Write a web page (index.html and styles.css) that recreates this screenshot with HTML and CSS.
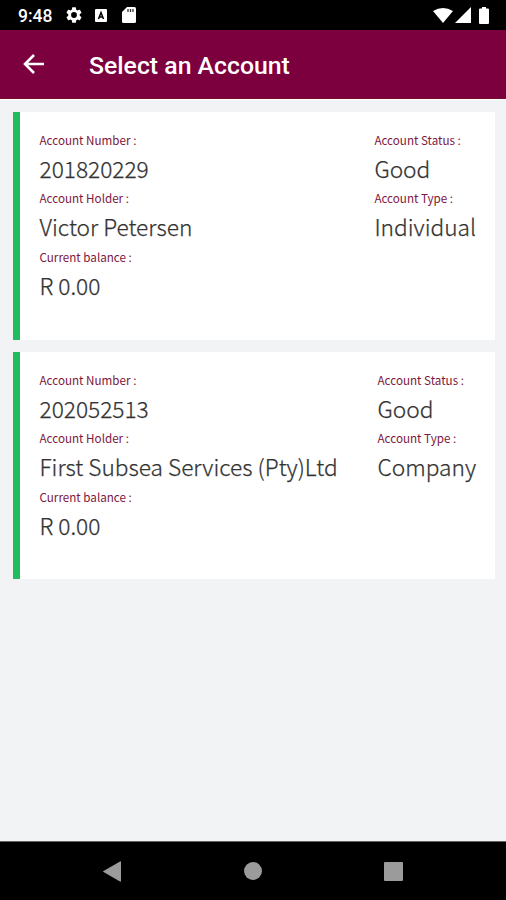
FILE: index.html
```html
<!DOCTYPE html>
<html lang="en">
<head>
<meta charset="utf-8">
<title>Select an Account</title>
<link rel="stylesheet" href="styles.css">
</head>
<body>
<div class="status-bar">
  <span class="clock">9:48</span>
  <svg class="gear" viewBox="2 2 20 20" width="16" height="16"><path fill="#fff" d="M19.14 12.94c.04-.3.06-.61.06-.94 0-.32-.02-.64-.07-.94l2.03-1.58a.49.49 0 0 0 .12-.61l-1.92-3.32a.49.49 0 0 0-.59-.22l-2.39.96a7 7 0 0 0-1.62-.94L14.4 2.81a.48.48 0 0 0-.48-.41h-3.84a.47.47 0 0 0-.47.41l-.36 2.54c-.59.24-1.13.57-1.62.94l-2.39-.96a.48.48 0 0 0-.59.22L2.74 8.87a.47.47 0 0 0 .12.61l2.03 1.58a6 6 0 0 0 0 1.88l-2.03 1.58a.49.49 0 0 0-.12.61l1.92 3.32c.12.22.37.29.59.22l2.39-.96c.5.38 1.03.7 1.62.94l.36 2.54c.05.24.24.41.48.41h3.84c.24 0 .44-.17.47-.41l.36-2.54a7 7 0 0 0 1.62-.94l2.39.96c.22.08.47 0 .59-.22l1.92-3.32a.47.47 0 0 0-.12-.61zM12 15.6a3.6 3.6 0 1 1 0-7.2 3.6 3.6 0 0 1 0 7.2z"/></svg>
  <svg class="keyboard" viewBox="0 0 12 13" width="12" height="13"><rect width="12" height="13" rx="1" fill="#fff"/><path d="M3.500 10 6 3.500 8.500 10M4.500 8h3" fill="none" stroke="#000" stroke-width="1.500"/></svg>
  <svg class="sdcard" viewBox="0 0 14 16" width="14" height="16"><path fill="#fff" d="M5 0h7.500Q14 0 14 1.500v13q0 1.500-1.500 1.500h-11Q0 16 0 14.500V5z"/><path stroke="#333" stroke-width="1.300" d="M6 2v3M8.500 2v3M11 2v3"/></svg>
  <div class="signals">
    <svg viewBox="0 0 20 15" width="20" height="15"><path fill="#fff" d="M0 3Q10-3 20 3L10 15z"/></svg>
    <svg viewBox="0 0 16 16" width="16" height="16"><path fill="#fff" d="M16 0v16H0z"/></svg>
    <svg class="battery" viewBox="0 0 10 17" width="10" height="17"><path fill="#fff" d="M3 0h4v1.500h2q1 0 1 1V16q0 1-1 1H1q-1 0-1-1V2.500q0-1 1-1h2z"/></svg>
  </div>
</div>
<header class="app-bar">
  <svg viewBox="0 0 22 20" width="22" height="20"><path d="M21 10H2M11 1 2 10l9 9" fill="none" stroke="#fff" stroke-width="2.600"/></svg>
  <h1>Select an Account</h1>
</header>
<main class="accounts">
  <section class="card">
    <dl>
      <dt>Account Number :</dt><dd>201820229</dd>
      <dt>Account Holder :</dt><dd>Victor Petersen</dd>
      <dt>Current balance :</dt><dd>R 0.00</dd>
    </dl>
    <dl>
      <dt>Account Status :</dt><dd>Good</dd>
      <dt>Account Type :</dt><dd>Individual</dd>
    </dl>
  </section>
  <section class="card">
    <dl>
      <dt>Account Number :</dt><dd>202052513</dd>
      <dt>Account Holder :</dt><dd>First Subsea Services (Pty)Ltd</dd>
      <dt>Current balance :</dt><dd>R 0.00</dd>
    </dl>
    <dl>
      <dt>Account Status :</dt><dd>Good</dd>
      <dt>Account Type :</dt><dd>Company</dd>
    </dl>
  </section>
</main>
<nav class="nav-bar">
  <svg viewBox="0 0 18 21" width="18" height="21"><path fill="#9b9b9b" d="M17 .5q1-.5 1 .5v19q0 1-1 .5L.5 11q-.8-.5 0-1z"/></svg>
  <svg viewBox="0 0 18 18" width="18" height="18"><circle cx="9" cy="9" r="9" fill="#9b9b9b"/></svg>
  <svg viewBox="0 0 19 19" width="19" height="19"><rect width="19" height="19" rx="1" fill="#9b9b9b"/></svg>
</nav>
</body>
</html>
```
FILE: styles.css
```css
* { box-sizing: border-box; }
body {
  margin: 0;
  height: 900px;
  display: flex;
  flex-direction: column;
  overflow: hidden;
  background: #f1f3f5;
  font-family: "Noto Sans CJK SC", "Noto Sans", sans-serif;
}
svg { display: block; flex: none; }
.status-bar {
  height: 30px;
  padding: 0 17px 0 18px;
  display: flex;
  align-items: center;
  background: #000;
  color: #fff;
}
.clock {
  width: 48px;
  padding-top: 1px;
  font: 500 17.5px/30px Roboto, sans-serif;
}
.keyboard { margin-left: 13px; }
.sdcard { margin-left: 15px; }
.signals {
  margin-left: auto;
  display: flex;
  align-items: center;
  gap: 2px;
}
.battery { margin-left: 6px; }
.app-bar {
  height: 69px;
  padding-left: 23px;
  display: flex;
  align-items: center;
  gap: 44px;
  background: #7c003e;
  border-bottom: 1px solid #760d29;
}
.app-bar h1 {
  margin: 3px 0 0;
  color: #fff;
  font: 500 24.8px/30px Roboto, sans-serif;
}
.accounts {
  flex: 1;
  padding: 12px 11px 0 13px;
  display: flex;
  flex-direction: column;
  gap: 12px;
  border-top: 1px solid #fff;
}
.card {
  height: 227.5px;
  padding: 14.5px 19px 0 19.5px;
  display: flex;
  justify-content: space-between;
  border-left: 7px solid #20bc5e;
  background: #fff;
}
.card + .card { padding-top: 15px; }
dl { margin: 0; white-space: nowrap; }
dt {
  height: 26px;
  color: #7c1740;
  font-size: 11.65px;
  line-height: 26px;
}
dd {
  height: 32.6px;
  margin: 0;
  color: #333;
  font-size: 22.7px;
  font-weight: 300;
  line-height: 31px;
  -webkit-text-stroke: 0.25px #333;
}
.nav-bar {
  height: 59px;
  padding: 0 103px;
  display: flex;
  align-items: center;
  justify-content: space-between;
  background: #000;
  border-top: 1px solid #666;
}
```
